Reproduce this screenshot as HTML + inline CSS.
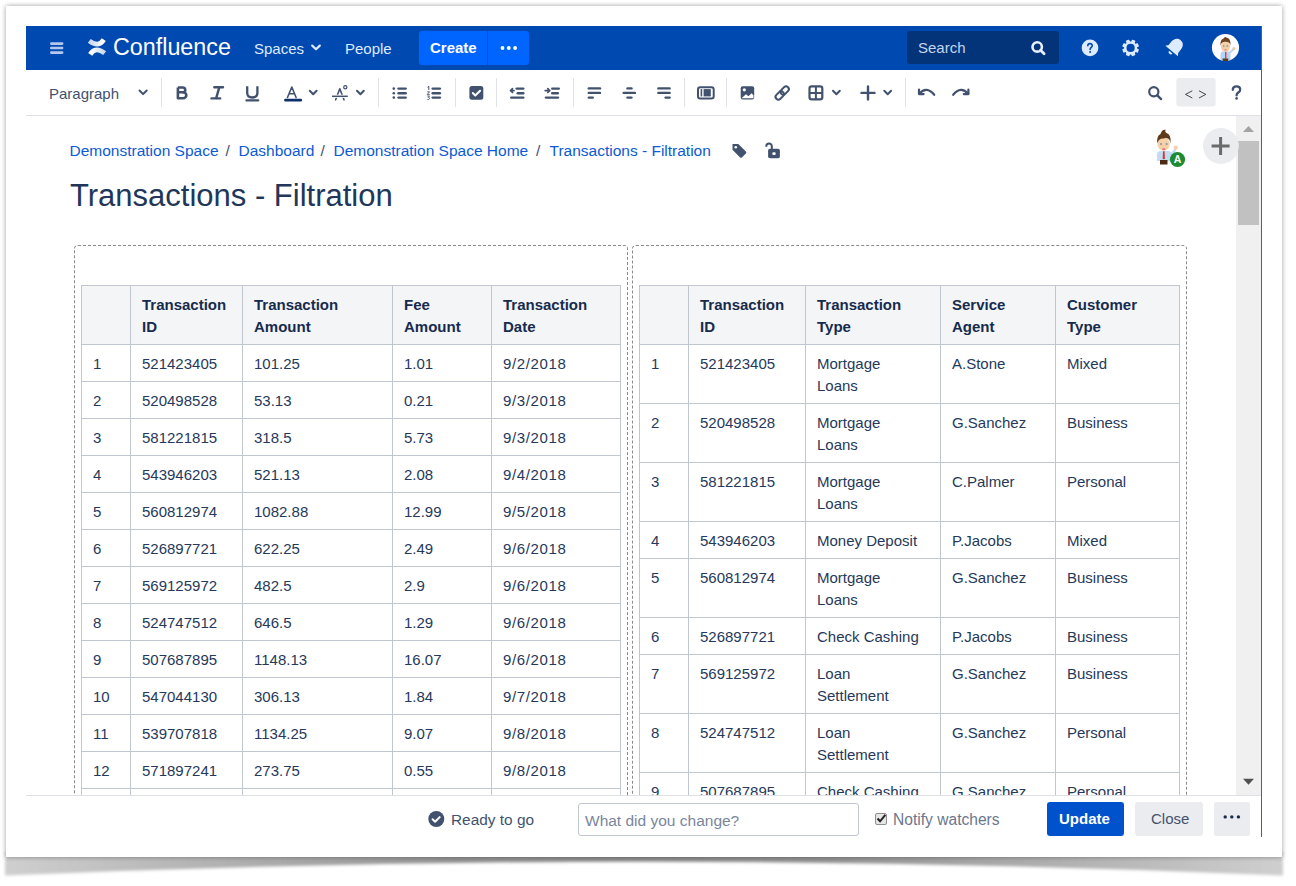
<!DOCTYPE html>
<html><head><meta charset="utf-8">
<style>
*{box-sizing:border-box;margin:0;padding:0}
html,body{width:1296px;height:886px;overflow:hidden;background:#fff;font-family:"Liberation Sans",sans-serif;color:#172b4d}
.abs{position:absolute}
#page{position:absolute;left:6px;top:6px;width:1276px;height:851px;background:#fff;box-shadow:-1px 0 5px rgba(0,0,0,0.17),1px 0 5px rgba(0,0,0,0.17),0 -1px 4px rgba(0,0,0,0.05)}

#app{position:absolute;left:26px;top:26px;width:1236px;height:811px;overflow:hidden;background:#fff}
#purple{position:absolute;left:1261px;top:26px;width:1px;height:811px;background:#9b2fb6}
#nav{position:absolute;left:0;top:0;width:1236px;height:44px;background:#0049b0}
.navtxt{position:absolute;color:#deebff;font-size:15px;line-height:20px;white-space:nowrap}
#tb{position:absolute;left:0;top:44px;width:1236px;height:46px;border-bottom:1px solid #dfe1e6;background:#fff}
.sep{position:absolute;top:8px;width:1px;height:29px;background:#dfe1e6}
.ic{position:absolute}
#content{position:absolute;left:0;top:90px;width:1236px;height:680px;overflow:hidden;background:#fff}
#footer{position:absolute;left:0;top:769px;width:1236px;height:42px;box-shadow:inset 0 1px 0 #dfe1e6;background:#fff}
table{border-collapse:collapse;table-layout:fixed;position:absolute;font-size:15px;color:#172b4d}
td{color:#26395a}
.lt td:nth-child(5){letter-spacing:0.65px}
td,th{border:1px solid #c1c7d0;padding:8px 12px 6px 11px;line-height:22px;vertical-align:top;text-align:left;white-space:nowrap;overflow:hidden}
th{background:#f4f5f7;font-weight:bold}
.cont{position:absolute;border:1px dashed #8a8a8a;border-radius:4px}
</style></head><body>
<svg id="shadow" width="1296" height="886" style="position:absolute;left:0;top:0" viewBox="0 0 1296 886">
  <defs>
    <linearGradient id="shg" x1="0" y1="0" x2="1" y2="0">
      <stop offset="0" stop-color="#cfcfcf"/><stop offset="0.12" stop-color="#b9b9b9"/><stop offset="0.35" stop-color="#939393"/><stop offset="0.5" stop-color="#8c8c8c"/><stop offset="0.65" stop-color="#939393"/><stop offset="0.88" stop-color="#b9b9b9"/><stop offset="1" stop-color="#cfcfcf"/>
    </linearGradient>
    <filter id="blr" x="-5%" y="-50%" width="110%" height="200%"><feGaussianBlur stdDeviation="1.6"/></filter>
  </defs>
  <path d="M5,852 L1283,852 L1283,875.5 Q644,848 5,875.5 Z" fill="url(#shg)" filter="url(#blr)"/>
</svg>
<div id="page"></div>
<div id="app">
  <div id="nav">
    <svg class="ic" style="left:0;top:0" width="1236" height="44">
      <g fill="#b4c8ee"><rect x="24" y="16.2" width="13.4" height="2.7" rx="1.3"/><rect x="24" y="20.7" width="13.4" height="2.5" rx="1.2"/><rect x="24" y="25.2" width="13.4" height="2.7" rx="1.3"/></g>
      <defs><linearGradient id="lg1" x1="0" y1="0" x2="1" y2="0"><stop offset="0" stop-color="#c9d6ee"/><stop offset="1" stop-color="#ffffff"/></linearGradient>
      <linearGradient id="lg2" x1="0" y1="0" x2="1" y2="0"><stop offset="0" stop-color="#ffffff"/><stop offset="1" stop-color="#c9d6ee"/></linearGradient></defs>
      <path d="M63.3,14.8 Q72.5,22 77.8,13.6" stroke="url(#lg1)" stroke-width="4.8" fill="none"/>
      <path d="M78.7,27.2 Q69.5,20 64.2,28.4" stroke="url(#lg2)" stroke-width="4.8" fill="none"/>
      <path d="M286.2,19.6 l3.8,3.6 l3.8,-3.6" stroke="#deebff" stroke-width="2.2" fill="none" stroke-linecap="round" stroke-linejoin="round"/>
    </svg>
    <div class="navtxt" style="left:87px;top:8px;font-size:23.3px;line-height:26px;color:#fff">Confluence</div>
    <div class="navtxt" style="left:228px;top:13px">Spaces</div>
    <div class="navtxt" style="left:319px;top:13px">People</div>
    <div class="abs" style="left:393px;top:5px;width:110px;height:34px;background:#0065ff;border-radius:3px"></div>
    <div class="abs" style="left:461px;top:5px;width:1px;height:34px;background:#0052cc"></div>
    <div class="navtxt" style="left:404px;top:12px;color:#fff;font-weight:bold">Create</div>
    <svg class="ic" style="left:473px;top:17px" width="20" height="10"><g fill="#fff"><circle cx="3.5" cy="5" r="1.9"/><circle cx="9.8" cy="5" r="1.9"/><circle cx="16.1" cy="5" r="1.9"/></g></svg>
    <div class="abs" style="left:881px;top:5px;width:152px;height:33px;background:#033479;border-radius:3px"></div>
    <div class="navtxt" style="left:892px;top:12px;color:#c5d5f0">Search</div>
    <svg class="ic" style="left:1003px;top:14px" width="18" height="18"><circle cx="8.2" cy="6.9" r="4.7" stroke="#e8f0ff" stroke-width="2.6" fill="none"/><path d="M11.6,10.3 l3.5,3.5" stroke="#e8f0ff" stroke-width="2.8" stroke-linecap="round"/></svg>
    <svg class="ic" style="left:1052px;top:10px" width="24" height="24"><circle cx="12" cy="11.9" r="8.3" fill="#deebff"/><path d="M9.8,9.8 C9.8,6.9 14.3,6.9 14.3,9.6 C14.3,11.3 12.1,11.5 12.1,13.4" stroke="#0049b0" stroke-width="1.6" fill="none" stroke-linecap="round"/><circle cx="12.1" cy="16" r="1" fill="#0049b0"/></svg>
    <svg class="ic" style="left:1092px;top:10px" width="24" height="24" viewBox="0 0 24 24"><g transform="translate(12.6,11.9)"><g fill="#deebff" transform="rotate(22.5)"><rect x="-1.9" y="-8.4" width="3.8" height="16.8" rx="0.8"/><rect x="-1.9" y="-8.4" width="3.8" height="16.8" rx="0.8" transform="rotate(45)"/><rect x="-1.9" y="-8.4" width="3.8" height="16.8" rx="0.8" transform="rotate(90)"/><rect x="-1.9" y="-8.4" width="3.8" height="16.8" rx="0.8" transform="rotate(135)"/><circle r="6.5"/></g><circle r="4.1" fill="#0049b0"/></g></svg>
    <svg class="ic" style="left:1136px;top:9px" width="26" height="24" viewBox="0 0 26 24"><g transform="rotate(40 13 12)" fill="#deebff"><path d="M13,3.2 C17.5,3.2 19.2,7 19.2,10.5 L19.2,14.5 L21.2,17.2 L4.8,17.2 L6.8,14.5 L6.8,10.5 C6.8,7 8.5,3.2 13,3.2 Z"/><path d="M10.8,18.6 a2.2,2.2 0 0 0 4.4,0 Z"/></g></svg>
    <svg class="ic" style="left:1185px;top:7px" width="29" height="29" viewBox="0 0 29 29">
      <circle cx="14.5" cy="14.5" r="13.6" fill="#fff"/>
      <path d="M9.5,22 Q9.5,18.8 12,18.6 L17,18.6 Q19.5,18.8 19.5,22 L19.5,27 L9.5,27 Z" fill="#b8d4f4"/>
      <path d="M18,20 L22.5,16.5" stroke="#b8d4f4" stroke-width="1.8" stroke-linecap="round"/>
      <circle cx="22.8" cy="15.5" r="1.5" fill="#f2c9a0"/>
      <rect x="14" y="18.6" width="1.4" height="7" fill="#d8453c"/>
      <rect x="11.6" y="25.5" width="5.6" height="2.5" fill="#5a3a1e"/>
      <ellipse cx="14.5" cy="13.6" rx="4.6" ry="5.2" fill="#f4cfa7"/>
      <path d="M9.6,12.4 Q9,6.5 12.6,5.6 Q13.6,3.4 15.4,4.4 Q19.8,5 19.6,12.4 Q18.6,8.6 14.5,8.8 Q10.4,8.6 9.6,12.4 Z" fill="#6e4320"/>
      <circle cx="12.7" cy="12.9" r="0.9" fill="#8a9aa6"/><circle cx="16.3" cy="12.9" r="0.9" fill="#8a9aa6"/>
      <rect x="13.3" y="16.4" width="2.4" height="0.9" rx="0.4" fill="#e0505a"/>
    </svg>
  </div>
  <div id="tb">
    <div class="abs" style="left:23px;top:57px;font-size:15px;line-height:20px;color:#42526e;white-space:nowrap;top:13.6px">Paragraph</div>
    <svg class="ic" style="left:0;top:0" width="1236" height="45" viewBox="0 44 1236 45">
      <g stroke="#42526e" stroke-width="2" fill="none" stroke-linecap="round" stroke-linejoin="round">
        <path d="M113.5,64.5 l3.6,3.6 l3.6,-3.6"/>
        <path d="M283.8,64.8 l3.4,3.4 l3.4,-3.4"/>
        <path d="M331,64.8 l3.4,3.4 l3.4,-3.4"/>
        <path d="M807,64.8 l3.4,3.4 l3.4,-3.4"/>
        <path d="M858.3,64.8 l3.4,3.4 l3.4,-3.4"/>
      </g>
      <g fill="#dfe1e6"><rect x="135" y="52" width="1" height="29"/><rect x="352" y="52" width="1" height="29"/><rect x="429" y="52" width="1" height="29"/><rect x="470" y="52" width="1" height="29"/><rect x="547" y="52" width="1" height="29"/><rect x="658" y="52" width="1" height="29"/><rect x="700" y="52" width="1" height="29"/><rect x="879" y="52" width="1" height="29"/></g>
      <path d="M151.9,61.5 v10.8 h5.4 a3,3 0 0 0 0,-6 h-5.4 M151.9,61.5 h4.8 a2.5,2.5 0 0 1 0,5.1" stroke="#42526e" stroke-width="2.6" fill="none" stroke-linejoin="round"/>
      <path d="M188.3,61.3 h8.7 M185.5,72.4 h8.7 M193.3,61.3 l-3.2,11.1" stroke="#42526e" stroke-width="2.4" fill="none" stroke-linecap="round"/>
      <path d="M221.2,60.3 v6.8 q0,4.4 5.1,4.4 q5.1,0 5.1,-4.4 v-6.8" stroke="#42526e" stroke-width="2.3" fill="none" stroke-linecap="butt"/>
      <rect x="219.4" y="73.3" width="13.9" height="2.3" rx="1" fill="#42526e"/>
      <path d="M261.5,71.5 l4.3,-10.5 l4.3,10.5 M263.2,67.8 h5.2" stroke="#42526e" stroke-width="1.6" fill="none" stroke-linecap="round" stroke-linejoin="round"/>
      <rect x="258.2" y="72.8" width="17.8" height="2.6" rx="1" fill="#0a2f6b"/>
      <path d="M309.6,73.8 l4.2,-11 l4.2,11" stroke="#42526e" stroke-width="1.6" fill="none" stroke-linecap="round" stroke-linejoin="round"/>
      <path d="M306,70.3 h15.8" stroke="#fff" stroke-width="3.2"/>
      <path d="M306,70.3 h15.8" stroke="#42526e" stroke-width="1.5"/>
      <circle cx="319.3" cy="61.2" r="1.6" stroke="#42526e" stroke-width="1.2" fill="none"/>
      <g fill="#42526e">
        <circle cx="367.8" cy="62.6" r="1.3"/><circle cx="367.8" cy="67.2" r="1.3"/><circle cx="367.8" cy="71.6" r="1.3"/>
        <rect x="371.3" y="61.4" width="9.6" height="2.4" rx="1.2"/><rect x="371.3" y="66" width="9.6" height="2.4" rx="1.2"/><rect x="371.3" y="70.4" width="9.6" height="2.4" rx="1.2"/>
        <rect x="405.5" y="61.4" width="9.6" height="2.4" rx="1.2"/><rect x="405.5" y="66" width="9.6" height="2.4" rx="1.2"/><rect x="405.5" y="70.4" width="9.6" height="2.4" rx="1.2"/>
        <path d="M401.5,61.2 l1.3,-0.8 v3.6" stroke="#42526e" stroke-width="1" fill="none"/>
        <path d="M401.3,65.8 h2.2 l-2.2,2.6 h2.4" stroke="#42526e" stroke-width="0.9" fill="none"/>
        <path d="M401.3,70 h2.2 l-1.2,1.3 q1.4,0.3 1.2,1.3 q-0.3,1.2 -2.2,0.8" stroke="#42526e" stroke-width="0.9" fill="none"/>
      </g>
      <rect x="443.4" y="59.9" width="13.9" height="13.9" rx="2.5" fill="#42526e"/>
      <path d="M446.8,67 l2.5,2.5 l4.8,-4.8" stroke="#fff" stroke-width="2" fill="none" stroke-linecap="round" stroke-linejoin="round"/>
      <g fill="#42526e">
        <rect x="489.5" y="61.4" width="9" height="2.4" rx="1.2"/><rect x="490.5" y="66" width="8" height="2.4" rx="1.2"/><rect x="484" y="70.4" width="14.5" height="2.4" rx="1.2"/>
        <rect x="525" y="61.4" width="9" height="2.4" rx="1.2"/><rect x="525" y="66" width="8" height="2.4" rx="1.2"/><rect x="518.7" y="70.4" width="14.5" height="2.4" rx="1.2"/>
      </g>
      <path d="M488,64.6 h-3 M486.5,62.7 l-2,1.9 l2,1.9" stroke="#42526e" stroke-width="1.7" fill="none" stroke-linecap="round" stroke-linejoin="round"/>
      <path d="M519.2,64.6 h4 M521.8,62.7 l2,1.9 l-2,1.9" stroke="#42526e" stroke-width="1.7" fill="none" stroke-linecap="round" stroke-linejoin="round"/>
      <g fill="#42526e">
        <rect x="561.6" y="61.2" width="13.6" height="2.4" rx="1.2"/><rect x="561.6" y="65.7" width="13.6" height="2.4" rx="1.2"/><rect x="561.6" y="70.4" width="6.4" height="2.4" rx="1.2"/>
        <rect x="600.3" y="61.2" width="6.4" height="2.4" rx="1.2"/><rect x="596.5" y="65.7" width="13.6" height="2.4" rx="1.2"/><rect x="600.3" y="70.4" width="6.4" height="2.4" rx="1.2"/>
        <rect x="631.2" y="61.2" width="13.6" height="2.4" rx="1.2"/><rect x="631.2" y="65.7" width="13.6" height="2.4" rx="1.2"/><rect x="638.4" y="70.4" width="6.4" height="2.4" rx="1.2"/>
      </g>
      <rect x="672" y="61.2" width="15.7" height="11.3" rx="2.2" stroke="#42526e" stroke-width="2" fill="none"/>
      <rect x="674.6" y="63.1" width="1.6" height="7.3" fill="#42526e"/><rect x="677.6" y="63.1" width="7.2" height="7.3" fill="#42526e"/>
      <rect x="714.7" y="60.2" width="13.5" height="13.3" rx="2" fill="#42526e"/>
      <circle cx="718.3" cy="63.8" r="1.6" fill="#fff"/>
      <path d="M715.5,72.2 l4.5,-4 l2.5,2 l3,-3 l2,2 v3 Z" fill="#fff"/>
      <g transform="translate(756.2,67) rotate(-45)" stroke="#42526e" stroke-width="2" fill="none"><rect x="-8.2" y="-2.8" width="9.4" height="5.6" rx="2.8"/><rect x="-1.2" y="-2.8" width="9.4" height="5.6" rx="2.8"/></g>
      <rect x="783.5" y="60.4" width="12.8" height="13" rx="2.2" stroke="#42526e" stroke-width="2.2" fill="none"/>
      <path d="M789.9,60.4 v13 M783.5,66.9 h12.8" stroke="#42526e" stroke-width="2"/>
      <path d="M835.5,66.9 h13 M842,60.4 v13" stroke="#42526e" stroke-width="2.4" stroke-linecap="round"/>
      <path d="M893.2,67.8 Q900.5,59.5 908.2,68.8" stroke="#42526e" stroke-width="2.2" fill="none" stroke-linecap="round"/>
      <path d="M893,63.5 v4.6 h4.6" stroke="#42526e" stroke-width="2.2" fill="none" stroke-linecap="round" stroke-linejoin="round"/>
      <path d="M942.2,67.8 Q934.9,59.5 927.2,68.8" stroke="#42526e" stroke-width="2.2" fill="none" stroke-linecap="round"/>
      <path d="M942.4,63.5 v4.6 h-4.6" stroke="#42526e" stroke-width="2.2" fill="none" stroke-linecap="round" stroke-linejoin="round"/>
      <circle cx="1127.8" cy="65.8" r="4.6" stroke="#42526e" stroke-width="2.2" fill="none"/>
      <path d="M1131.3,69.3 l3.8,3.8" stroke="#42526e" stroke-width="2.4" stroke-linecap="round"/>
      <rect x="1150.3" y="52" width="39.4" height="28.6" rx="3" fill="#ebecf0"/>
      <path d="M1166.3,64.8 l-6.8,3.6 l6.8,3.6 M1173,64.8 l6.8,3.6 l-6.8,3.6" stroke="#333" stroke-width="0.9" fill="none"/>
      <path d="M1206.8,63.8 q0,-3.4 3.7,-3.4 q3.7,0 3.7,3.2 q0,2 -2,3 q-1.6,0.8 -1.6,2.8" stroke="#42526e" stroke-width="2.3" fill="none" stroke-linecap="round"/>
      <circle cx="1210.6" cy="72.4" r="1.3" fill="#42526e"/>
    </svg>
  </div>
  <div id="content">
    <div class="crumbs" style="position:absolute;left:0;top:25px;height:20px;font-size:15.5px;line-height:20px;white-space:nowrap;color:#0c5ad4">
      <span class="abs" style="left:43.5px">Demonstration Space</span>
      <span class="abs" style="left:199.5px;color:#42526e">/</span>
      <span class="abs" style="left:212.5px">Dashboard</span>
      <span class="abs" style="left:294.5px;color:#42526e">/</span>
      <span class="abs" style="left:307.5px">Demonstration Space Home</span>
      <span class="abs" style="left:510px;color:#42526e">/</span>
      <span class="abs" style="left:523.5px">Transactions - Filtration</span>
    </div>
    <svg class="ic" style="left:0;top:0" width="1236" height="60">
      <path d="M706.5,28 h5.8 l7.6,7.6 q0.9,0.9 0,1.8 l-4,4 q-0.9,0.9 -1.8,0 l-7.6,-7.6 Z" fill="#42526e"/>
      <circle cx="709.8" cy="31.3" r="1.3" fill="#fff"/>
      <rect x="742.1" y="32.8" width="11.8" height="9.4" rx="1.8" fill="#42526e"/>
      <path d="M740.3,30.8 v-0.6 a2.75,2.75 0 0 1 5.5,0 v3" stroke="#42526e" stroke-width="2" fill="none"/>
      <rect x="746.3" y="36.2" width="3.4" height="2.8" rx="1.2" fill="#fff"/>
    </svg>
    <div class="abs" style="left:44px;top:62px;font-size:31px;line-height:36px;white-space:nowrap;color:#22365a">Transactions - Filtration</div>
    <div class="cont" style="left:48px;top:129px;width:554px;height:700px"></div>
    <div class="cont" style="left:606px;top:129px;width:555px;height:700px"></div>
    <table class="lt" style="left:55px;top:169px;width:540px"><colgroup><col style="width:49px"><col style="width:112px"><col style="width:150px"><col style="width:99px"><col style="width:129px"></colgroup><tr><th></th><th>Transaction<br>ID</th><th>Transaction<br>Amount</th><th>Fee<br>Amount</th><th>Transaction<br>Date</th></tr><tr><td>1</td><td>521423405</td><td>101.25</td><td>1.01</td><td>9/2/2018</td></tr><tr><td>2</td><td>520498528</td><td>53.13</td><td>0.21</td><td>9/3/2018</td></tr><tr><td>3</td><td>581221815</td><td>318.5</td><td>5.73</td><td>9/3/2018</td></tr><tr><td>4</td><td>543946203</td><td>521.13</td><td>2.08</td><td>9/4/2018</td></tr><tr><td>5</td><td>560812974</td><td>1082.88</td><td>12.99</td><td>9/5/2018</td></tr><tr><td>6</td><td>526897721</td><td>622.25</td><td>2.49</td><td>9/6/2018</td></tr><tr><td>7</td><td>569125972</td><td>482.5</td><td>2.9</td><td>9/6/2018</td></tr><tr><td>8</td><td>524747512</td><td>646.5</td><td>1.29</td><td>9/6/2018</td></tr><tr><td>9</td><td>507687895</td><td>1148.13</td><td>16.07</td><td>9/6/2018</td></tr><tr><td>10</td><td>547044130</td><td>306.13</td><td>1.84</td><td>9/7/2018</td></tr><tr><td>11</td><td>539707818</td><td>1134.25</td><td>9.07</td><td>9/8/2018</td></tr><tr><td>12</td><td>571897241</td><td>273.75</td><td>0.55</td><td>9/8/2018</td></tr><tr><td>13</td><td></td><td></td><td></td><td></td></tr><tr><td>14</td><td></td><td></td><td></td><td></td></tr></table>
    <table style="left:613px;top:169px;width:541px"><colgroup><col style="width:49px"><col style="width:117px"><col style="width:135px"><col style="width:115px"><col style="width:124px"></colgroup><tr><th></th><th>Transaction<br>ID</th><th>Transaction<br>Type</th><th>Service<br>Agent</th><th>Customer<br>Type</th></tr><tr><td>1</td><td>521423405</td><td>Mortgage<br>Loans</td><td>A.Stone</td><td>Mixed</td></tr><tr><td>2</td><td>520498528</td><td>Mortgage<br>Loans</td><td>G.Sanchez</td><td>Business</td></tr><tr><td>3</td><td>581221815</td><td>Mortgage<br>Loans</td><td>C.Palmer</td><td>Personal</td></tr><tr><td>4</td><td>543946203</td><td>Money Deposit</td><td>P.Jacobs</td><td>Mixed</td></tr><tr><td>5</td><td>560812974</td><td>Mortgage<br>Loans</td><td>G.Sanchez</td><td>Business</td></tr><tr><td>6</td><td>526897721</td><td>Check Cashing</td><td>P.Jacobs</td><td>Business</td></tr><tr><td>7</td><td>569125972</td><td>Loan<br>Settlement</td><td>G.Sanchez</td><td>Business</td></tr><tr><td>8</td><td>524747512</td><td>Loan<br>Settlement</td><td>G.Sanchez</td><td>Personal</td></tr><tr><td>9</td><td>507687895</td><td>Check Cashing</td><td>G.Sanchez</td><td>Personal</td></tr><tr><td>10</td><td></td><td></td><td></td><td></td></tr></table>
    <svg class="ic" style="left:1120px;top:8px" width="50" height="50" viewBox="1120 8 50 50">
      <path d="M1131,45 L1131,38.5 Q1131,35 1134.5,35 L1142,35 Q1144.5,35.2 1145.5,36.5 L1148.5,32.5 L1150.5,33.8 L1146.5,40 L1146,45 Z" fill="#c3dcf5"/>
      <circle cx="1149.8" cy="31.6" r="2.1" fill="#f6cfa6"/>
      <path d="M1137,35.2 h1.6 l0.3,7 l-1.1,1.2 l-1.1,-1.2 Z" fill="#d63a2f"/>
      <rect x="1134" y="44" width="7.5" height="4.5" fill="#4a2a12"/>
      <ellipse cx="1137.6" cy="28.2" rx="6" ry="6.6" fill="#f5d0a8"/>
      <path d="M1131.2,27.5 Q1130.5,19.5 1134.5,18 Q1136,13.2 1139.5,13.8 Q1138.5,16 1140.5,17 Q1145.5,18.5 1144.6,27.5 Q1143.8,22.5 1141,22.2 Q1139,21.5 1137.5,22.5 Q1133,22 1131.2,27.5 Z" fill="#5e3a1a"/>
      <circle cx="1135" cy="28" r="1.1" fill="#8c98a0"/><circle cx="1140.6" cy="28" r="1.1" fill="#8c98a0"/>
      <rect x="1136.3" y="32.6" width="3" height="1.2" rx="0.5" fill="#e24b55"/>
      <circle cx="1151.5" cy="43.5" r="7.6" fill="#1e8a31"/>
      <text x="1151.5" y="47.3" text-anchor="middle" font-family="Liberation Sans" font-weight="bold" font-size="10.5" fill="#fff">A</text>
    </svg>
    
    <div class="abs" style="left:1210px;top:0;width:25px;height:679px;background:#f0f0f0"></div>
    <div class="abs" style="left:1212px;top:25px;width:21px;height:84px;background:#c1c1c1"></div>
    <svg class="ic" style="left:1210px;top:0" width="25" height="679"><path d="M7,16 L12.5,10 L18,16 Z" fill="#a3a3a3"/><path d="M7,662.7 L18,662.7 L12.5,668.8 Z" fill="#505050"/></svg>
    <svg class="ic" style="left:1170px;top:4px" width="50" height="52" viewBox="1170 4 50 52">
      <circle cx="1194.9" cy="30" r="17.9" fill="#ebecf0"/>
      <path d="M1185.6,30 h18 M1194.6,21 v18" stroke="#6b6b6b" stroke-width="3"/>
    </svg>
  </div>
  <div id="footer">
    <svg class="ic" style="left:400px;top:14px" width="20" height="20" viewBox="400 14 20 20"><circle cx="410.3" cy="24" r="8" fill="#42526e"/><path d="M406.6,24.2 l2.5,2.5 l4.6,-4.6" stroke="#fff" stroke-width="2" fill="none" stroke-linecap="round" stroke-linejoin="round"/></svg>
    <div class="abs" style="left:425px;top:14.5px;font-size:15.4px;line-height:20px;color:#42526e;white-space:nowrap">Ready to go</div>
    <div class="abs" style="left:552px;top:8px;width:281px;height:33px;border:1px solid #c1c7d0;border-radius:3px;background:#fff"></div>
    <div class="abs" style="left:559px;top:15.5px;font-size:15.5px;line-height:20px;color:#7a869a;white-space:nowrap">What did you change?</div>
    <div class="abs" style="left:849px;top:17.5px;width:12px;height:12px;border:1px solid #8f8f8f;border-radius:2px;background:#e6e6e6"></div>
    <svg class="ic" style="left:849px;top:17px" width="13" height="13"><path d="M2.5,6.5 l2.6,2.8 l5.2,-6.4" stroke="#222" stroke-width="2" fill="none"/></svg>
    <div class="abs" style="left:867px;top:15.3px;font-size:15.6px;line-height:20px;color:#6b778c;white-space:nowrap">Notify watchers</div>
    <div class="abs" style="left:1021px;top:7px;width:77px;height:34px;background:#0052cc;border-radius:3px"></div>
    <div class="abs" style="left:1033px;top:14px;font-size:15px;line-height:20px;color:#fff;font-weight:bold;white-space:nowrap">Update</div>
    <div class="abs" style="left:1109px;top:7px;width:68px;height:34px;background:#ebecf0;border-radius:3px"></div>
    <div class="abs" style="left:1125px;top:14px;font-size:15px;line-height:20px;color:#42526e;white-space:nowrap">Close</div>
    <div class="abs" style="left:1188px;top:7px;width:36px;height:34px;background:#ebecf0;border-radius:3px"></div>
    <svg class="ic" style="left:1196px;top:17px" width="20" height="10"><g fill="#172b4d"><circle cx="3.2" cy="4.9" r="1.7"/><circle cx="9.8" cy="4.9" r="1.7"/><circle cx="16.4" cy="4.9" r="1.7"/></g></svg>
  </div>
</div>
<div id="purple"></div>
</body></html>
